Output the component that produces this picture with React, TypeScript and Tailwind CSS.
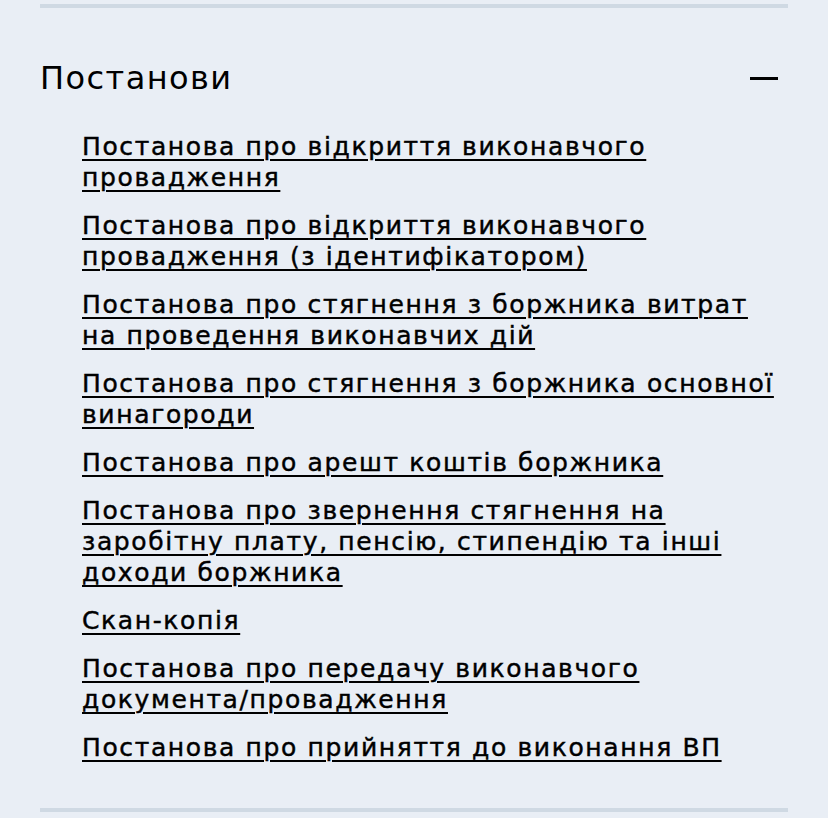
import type { ReactNode } from 'react';

const links: { id: string; label: ReactNode }[] = [
  { id: 'open', label: 'Постанова про відкриття виконавчого провадження' },
  { id: 'open-id', label: 'Постанова про відкриття виконавчого провадження (з ідентифікатором)' },
  { id: 'costs', label: 'Постанова про стягнення з боржника витрат на проведення виконавчих дій' },
  { id: 'reward', label: 'Постанова про стягнення з боржника основної винагороди' },
  { id: 'arrest', label: 'Постанова про арешт коштів боржника' },
  {
    id: 'income',
    label: 'Постанова про звернення стягнення на заробітну плату, пенсію, стипендію та інші доходи боржника',
  },
  { id: 'scan', label: 'Скан-копія' },
  {
    id: 'transfer',
    label: (
      <>
        Постанова про передачу виконавчого{' '}
        <span className="whitespace-nowrap">документа/провадження</span>
      </>
    ),
  },
  { id: 'accept', label: 'Постанова про прийняття до виконання ВП' },
];

export default function App() {
  return (
    <div className="min-h-[818px] w-[828px] bg-[#e9eef5] pt-1 font-['DejaVu_Sans',sans-serif] text-black">
      <div className="mx-10 border-t-4 border-b-4 border-[#cfd9e3]">
        {/* Accordion header */}
        <div className="flex items-center justify-between pt-[51px] pb-[34px] pr-[10px]">
          <h2 className="text-[32px] leading-[38px] font-normal tracking-[0.045em]">Постанови</h2>
          <span className="block h-[3px] w-[28px] bg-black" />
        </div>

        {/* Documents list */}
        <ul className="flex flex-col gap-[17px] pl-[42px] pr-[8px] pb-[45px]">
          {links.map((link) => (
            <li key={link.id}>
              <a
                href="#"
                className="text-[25px] leading-[31px] tracking-[0.065em] [-webkit-text-stroke:0.45px_black] underline decoration-[2px] underline-offset-[4px]"
              >
                {link.label}
              </a>
            </li>
          ))}
        </ul>
      </div>
    </div>
  );
}
